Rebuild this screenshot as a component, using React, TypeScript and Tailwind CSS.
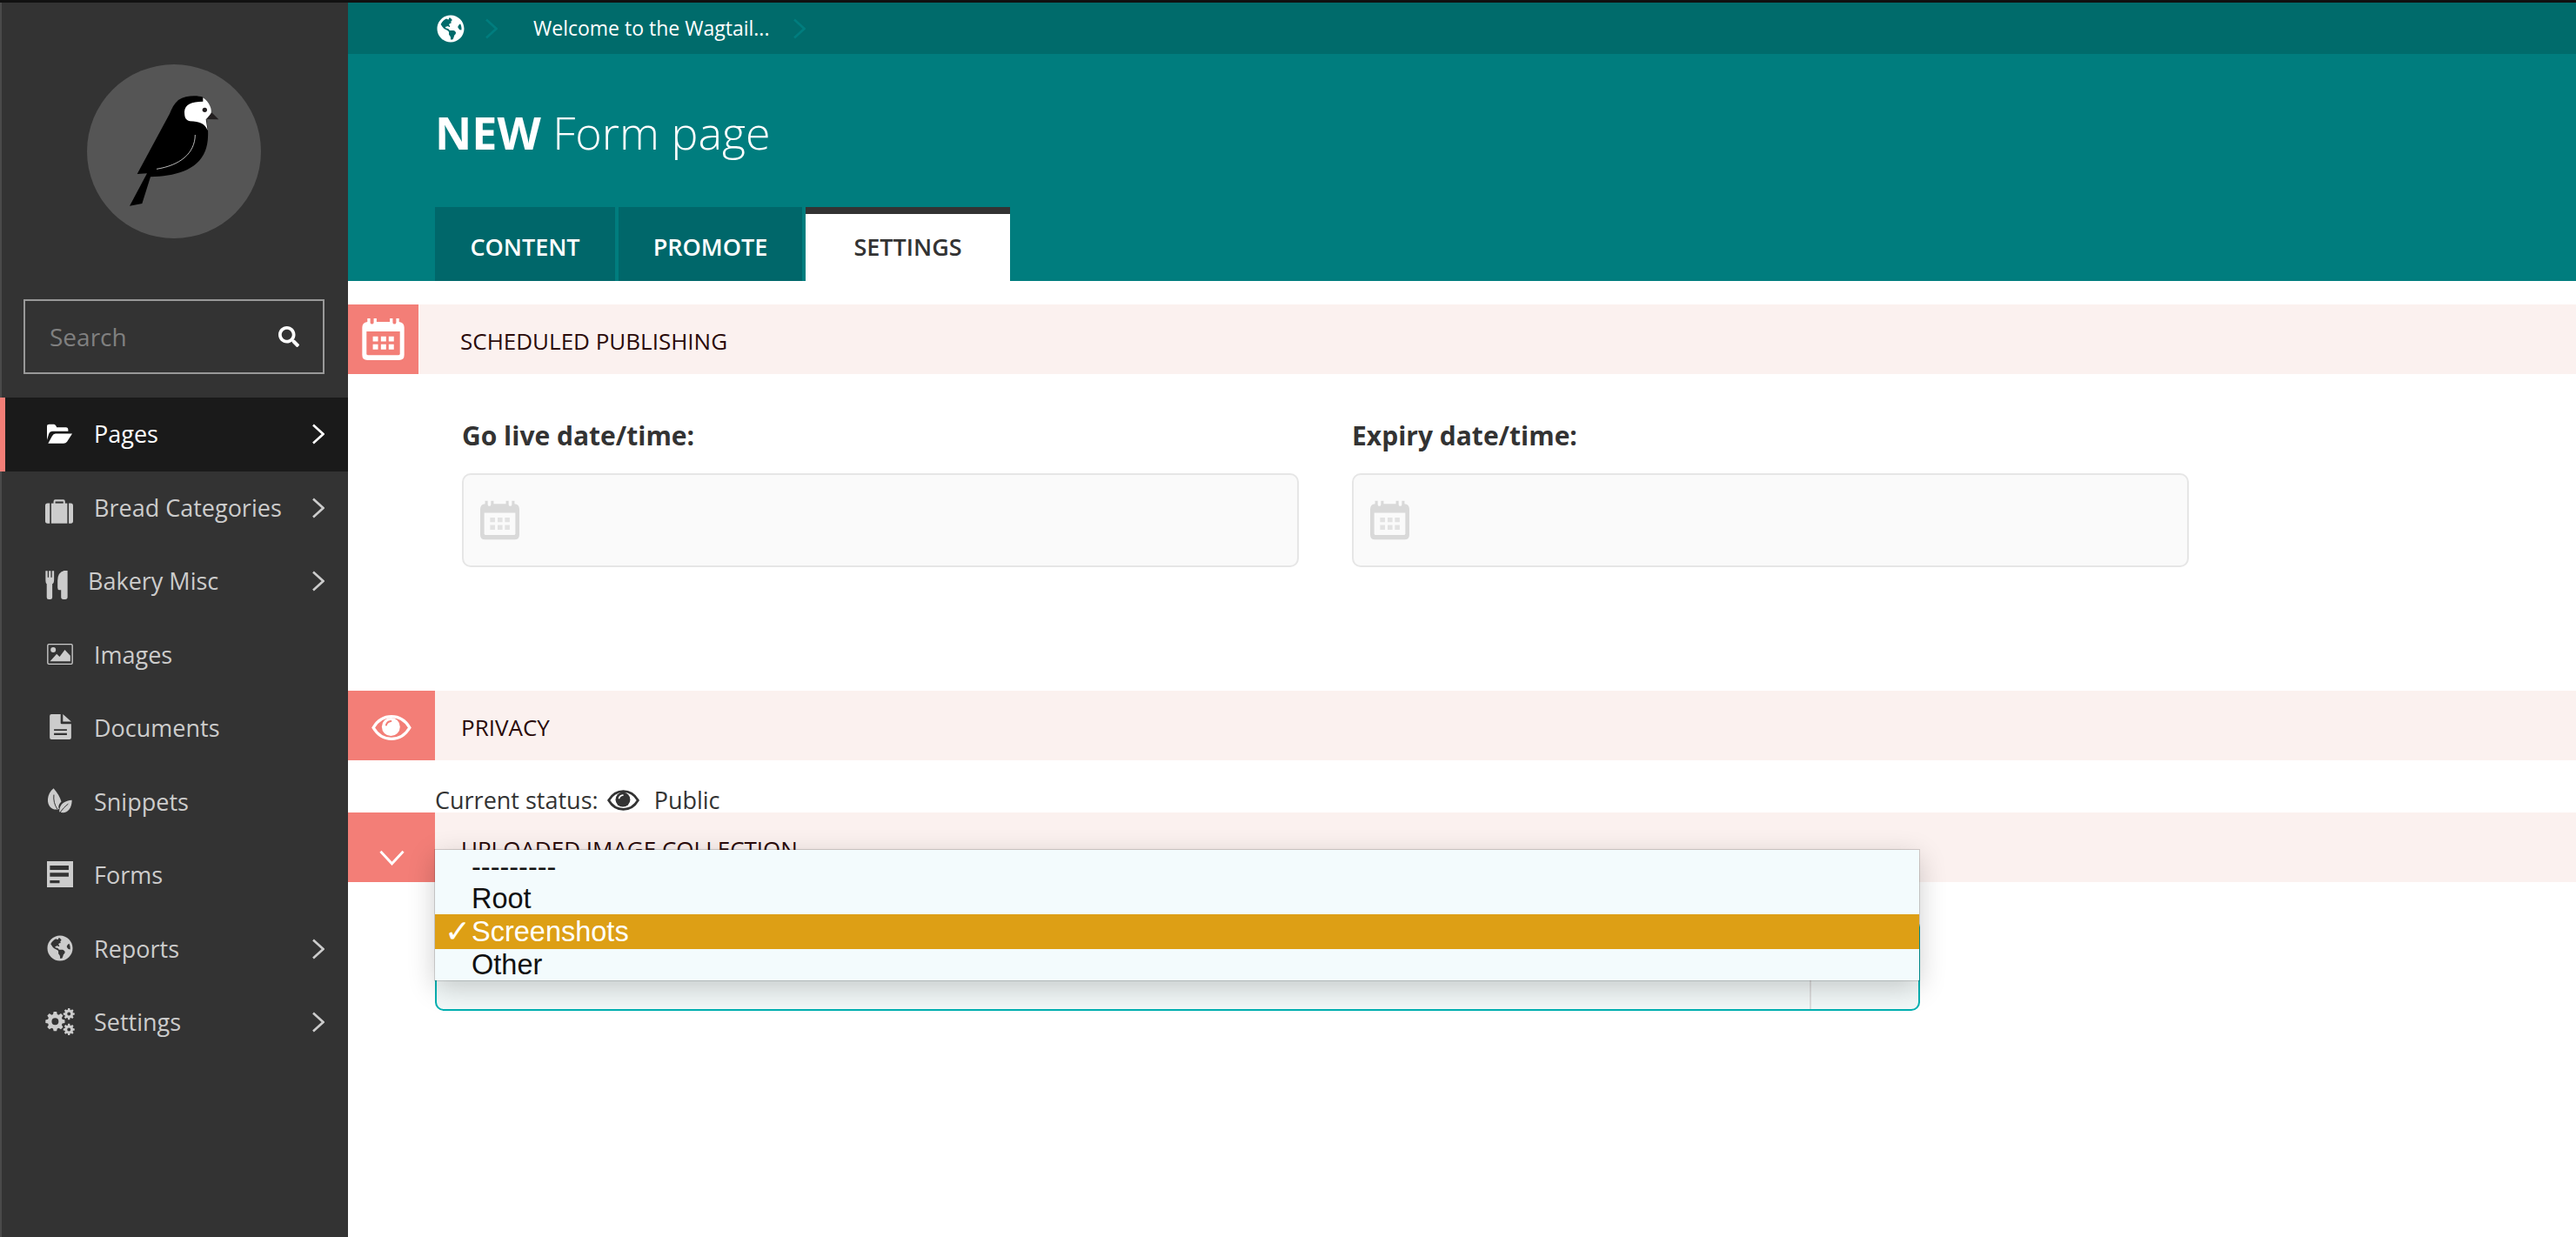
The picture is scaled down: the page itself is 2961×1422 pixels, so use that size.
import { ReactNode } from 'react';
import { FaGlobeAmericas, FaSearch } from 'react-icons/fa';

const Chevron = ({ className }: { className?: string }) => (
  <svg viewBox="0 0 14 24" className={className} fill="none" stroke="currentColor" strokeWidth="2.6">
    <path d="M1 1.5 L12.5 12 L1 22.5" />
  </svg>
);

// builds a cog outline with a hole, used by the settings icon
function gear(cx: number, cy: number, outer: number, inner: number, hole: number, teeth: number) {
  const pts: string[] = [];
  const step = (Math.PI * 2) / teeth;
  for (let i = 0; i < teeth; i++) {
    const a = i * step;
    const corners: [number, number][] = [
      [inner, a - step * 0.36],
      [outer, a - step * 0.2],
      [outer, a + step * 0.2],
      [inner, a + step * 0.36],
    ];
    corners.forEach(([r, t]) => pts.push(`${(cx + r * Math.cos(t)).toFixed(1)} ${(cy + r * Math.sin(t)).toFixed(1)}`));
  }
  return `M${pts.join('L')}Z M${cx - hole} ${cy}a${hole} ${hole} 0 1 0 ${hole * 2} 0a${hole} ${hole} 0 1 0 ${-hole * 2} 0Z`;
}

const FolderIcon = () => (
  <svg viewBox="42 50 88 68" className="w-[29px] h-[23px] ml-[2px] mb-[2px]" fill="#fff">
    <path d="M42 106 V58 Q42 51 50 51 H66 Q72 51 76 62 H108 Q116 62 116 72 V76 H62 Q52 76 48 86 Z" />
    <path d="M46 118 L60 92 Q64 84 72 84 H130 L112 112 Q108 118 100 118 Z" />
  </svg>
);

const SuitcaseIcon = () => (
  <svg viewBox="36 312 97 83" className="w-[32px] h-[28px] mt-[8px]" fill="#ccc">
    <path d="M65 326 V318 Q65 312 71 312 H99 Q105 312 105 318 V326 H99 V319 H71 V326 Z" />
    <path d="M57 325 H113 V395 H57 Z" />
    <path d="M52 325 V395 H44 Q36 395 36 387 V333 Q36 325 44 325 Z" />
    <path d="M118 325 V395 H125 Q133 395 133 387 V333 Q133 325 125 325 Z" />
  </svg>
);

const CutleryIcon = () => (
  <svg viewBox="36 556 77 98" className="w-[26px] h-[33px] mt-[8px]" fill="#ccc">
    <path d="M37 557h7v22h4v-22h7v22h4v-22h7v30q0 12 -6 14v46q0 7 -7 7h-5q-7 0 -7 -7v-46q-4 -2 -4 -14z" />
    <path d="M112 556 V646 q0 8 -8 8 h-6 q-8 0 -8 -8 V622 H84 Q78 622 78 614 V590 Q78 562 100 556 Z" />
  </svg>
);

const ImageIcon = () => (
  <svg viewBox="42 57 89 72" className="w-[30px] h-[24px] ml-[2px] mb-[2px]">
    <rect x="44" y="59" width="85" height="68" rx="4" fill="none" stroke="#ccc" strokeWidth="4" />
    <circle cx="63" cy="78" r="9" fill="#ccc" />
    <path fill="#ccc" d="M52 118 L75 92 L85 102 L103 78 L122 98 V118 Z" />
  </svg>
);

const DocumentIcon = () => (
  <svg viewBox="50 300 75 88" className="w-[25px] h-[29px] ml-[5px] mb-[4px]">
    <path fill="#ccc" d="M56 300 H88 V330 Q88 334 92 334 H125 V382 Q125 388 119 388 H56 Q50 388 50 382 V306 Q50 300 56 300 Z" />
    <path fill="#ccc" d="M96 300 L125 326 H96 Z" />
    <path fill="#333" d="M65 352 H110 V358 H65 Z M65 366 H110 V373 H65 Z" />
  </svg>
);

const LeavesIcon = () => (
  <svg viewBox="45 558 85 86" className="w-[28px] h-[29px] ml-[3px] mb-[2px]">
    <path fill="#ccc" d="M65 558 C40 578 38 615 60 628 Q72 634 84 630 C80 620 84 612 92 604 C88 590 78 572 65 558 Z" />
    <path fill="none" stroke="#333" strokeWidth="3" d="M66 580 C64 598 68 616 78 630" />
    <path fill="#ccc" d="M129 599 C106 600 84 612 85 640 C108 650 129 632 129 599 Z" />
    <path fill="none" stroke="#333" strokeWidth="3" d="M116 612 C106 620 96 630 88 642" />
  </svg>
);

const FormsIcon = () => (
  <svg viewBox="42 87 89 89" className="w-[30px] h-[30px] ml-[2px] mb-[2px]">
    <path fill="#ccc" d="M42 87h89v89H42z" />
    <path fill="#333" d="M52 102h64v15H52zM52 126h64v14H52zM52 152h33v10H52z" />
  </svg>
);

const GearsIcon = () => (
  <svg viewBox="36 592 102 94" className="w-[34px] h-[31px] mb-[2px]" fill="#ccc" fillRule="evenodd">
    <path d={gear(70, 638, 34, 26, 12, 8)} />
    <path d={gear(118, 612, 20, 15, 6, 8)} />
    <path d={gear(118, 666, 20, 15, 6, 8)} />
  </svg>
);

const Calendar = ({ bg, fg, cell, className }: { bg: string; fg: string; cell: string; className?: string }) => (
  <svg viewBox="0 0 146 145" className={className}>
    <path fill={bg} d="M18 0 h10 v14 a6 6 0 0 0 12 0 V0 h10 V12 H96 V0 h10 v14 a6 6 0 0 0 12 0 V0 h10 V12 q18 2 18 20 V127 q0 18 -18 18 H18 q-18 0 -18 -18 V32 q0 -18 18 -20 Z" />
    <path fill={fg} d="M15 45 H131 V122 q0 6 -6 6 H21 q-6 0 -6 -6 Z" />
    <path fill={cell} d="M37 63h18v17H37zM65 63h18v17H65zM92 63h18v17H92zM37 90h18v18H37zM65 90h18v18H65zM92 90h18v18H92z" />
  </svg>
);

const Eye = ({ color, cut, className }: { color: string; cut: string; className?: string }) => (
  <svg viewBox="0 0 136 86" className={className}>
    <path fill="none" stroke={color} strokeWidth="10" d="M6 43 C22 16 44 5 68 5 C92 5 114 16 130 43 C114 70 92 81 68 81 C44 81 22 70 6 43 Z" />
    <circle cx="66" cy="40" r="31" fill={color} />
    <path fill="none" stroke={cut} strokeWidth="6" strokeLinecap="round" d="M50 34 C52 26 58 22 66 21" />
  </svg>
);

const Bird = () => (
  <svg viewBox="300 222 600 600" className="w-[200px] h-[200px]">
    <path fill="#000" d="M447 710 L490 702 L519 610 C600 608 680 590 708 520 C720 490 718 450 716 440 L700 335 C680 328 640 328 615 345 C600 358 592 375 585 392 L473 600 L507 598 Z" />
    <path fill="#fff" d="M700 337 C722 352 733 378 727 395 L710 412 L716 450 C705 425 690 420 655 418 C640 415 636 405 636 385 C638 360 660 350 700 350 Z" />
    <path fill="#231f20" d="M712 411 L730 388 L754 412 Z" />
    <circle cx="706" cy="379" r="8" fill="#231f20" />
    <path fill="none" stroke="#ddd" strokeWidth="2.500" d="M673 465 C672 530 620 570 540 583" />
  </svg>
);

const navItems: { label: string; icon: ReactNode; iconWidth: string; arrow?: boolean; active?: boolean }[] = [
  { label: 'Pages', icon: <FolderIcon />, iconWidth: 'w-[56px]', arrow: true, active: true },
  { label: 'Bread Categories', icon: <SuitcaseIcon />, iconWidth: 'w-[56px]', arrow: true },
  { label: 'Bakery Misc', icon: <CutleryIcon />, iconWidth: 'w-[49px]', arrow: true },
  { label: 'Images', icon: <ImageIcon />, iconWidth: 'w-[56px]' },
  { label: 'Documents', icon: <DocumentIcon />, iconWidth: 'w-[56px]' },
  { label: 'Snippets', icon: <LeavesIcon />, iconWidth: 'w-[56px]' },
  { label: 'Forms', icon: <FormsIcon />, iconWidth: 'w-[56px]' },
  { label: 'Reports', icon: <FaGlobeAmericas className="w-[30px] h-[30px] ml-[2px] mb-[2px]" />, iconWidth: 'w-[56px]', arrow: true },
  { label: 'Settings', icon: <GearsIcon />, iconWidth: 'w-[56px]', arrow: true },
];

function SectionHeader({ title, icon, boxWidth, indent }: { title: string; icon: ReactNode; boxWidth: string; indent: string }) {
  return (
    <div className="flex h-[80px] bg-[#fbf1ef]">
      <div className={`${boxWidth} bg-[#f37e77] flex items-center justify-center text-white shrink-0`}>{icon}</div>
      <div className={`${indent} flex-1 flex items-center pt-[5px] text-[26px] text-[#2a0a0a]`}>{title}</div>
    </div>
  );
}

function DateField({ label }: { label: string }) {
  return (
    <div className="w-[962px]">
      <div className="text-[30px] leading-[38px] font-bold text-[#333]">{label}</div>
      <div className="mt-[24px] h-[108px] bg-[#fafafa] border-2 border-[#e6e6e6] rounded-[10px] flex items-center pl-[19px]">
        <Calendar bg="#d9d9d9" fg="#fafafa" cell="#e2e2e2" className="w-[45px] h-[46px]" />
      </div>
    </div>
  );
}

export default function App() {
  return (
    <div className="w-full h-[1422px] flex flex-col font-['Open_Sans',sans-serif] bg-white overflow-hidden">
      <div className="h-[3px] bg-[#111] shrink-0" />
      <div className="flex-1 flex min-h-0">
        {/* Sidebar */}
        <aside className="w-[400px] shrink-0 bg-[#333] border-l-2 border-[#4a4a4a]">
          <div className="flex justify-center pt-[71px] -ml-[2px]">
            <div className="w-[200px] h-[200px] rounded-full bg-[#555]">
              <Bird />
            </div>
          </div>
          <div className="mt-[70px] ml-[25px] mr-[27px] h-[86px] border-2 border-[#999] flex items-center pl-[28px] pr-[27px]">
            <span className="flex-1 text-[28px] text-[#808080]">Search</span>
            <FaSearch className="w-[24px] h-[24px] text-white" />
          </div>
          <nav className="mt-[27px] -ml-[2px]">
            {navItems.map((item) => (
              <div
                key={item.label}
                className={`h-[84.5px] flex items-center pr-[27px] text-[27px] ${
                  item.active ? 'bg-[#1a1a1a] text-white border-l-[6px] border-[#f37e77] pl-[46px]' : 'text-[#ccc] pl-[52px]'
                }`}
              >
                <div className={`${item.iconWidth} shrink-0 flex items-center text-[#ccc]`}>{item.icon}</div>
                <span className="flex-1">{item.label}</span>
                {item.arrow && <Chevron className="w-[14px] h-[24px]" />}
              </div>
            ))}
          </nav>
        </aside>

        {/* Main */}
        <main className="flex-1 min-w-0">
          <div className="h-[59px] bg-[#006b6b] flex items-center pl-[102px] text-white text-[23px]">
            <FaGlobeAmericas className="w-[32px] h-[32px]" />
            <Chevron className="w-[14px] h-[26px] ml-[24px] text-[#007d7e]" />
            <span className="ml-[41px]">Welcome to the Wagtail...</span>
            <Chevron className="w-[14px] h-[26px] ml-[28px] text-[#007d7e]" />
          </div>
          <div className="h-[261px] bg-[#007d7e] pl-[100px] flex flex-col">
            <h1 className="mt-[55px] text-[52px] leading-[70px] text-white font-light">
              <span className="font-bold">NEW</span> Form page
            </h1>
            <div className="mt-auto flex gap-[4px] text-[27px] font-semibold">
              <div className="w-[207px] h-[85px] bg-[#00676a] text-white pt-[8px] flex items-center justify-center">CONTENT</div>
              <div className="w-[211px] h-[85px] bg-[#00676a] text-white pt-[8px] flex items-center justify-center">PROMOTE</div>
              <div className="w-[235px] h-[85px] bg-white text-[#333] border-t-8 border-[#333] flex items-center justify-center">SETTINGS</div>
            </div>
          </div>

          <div className="pt-[27px]">
            <SectionHeader
              title="SCHEDULED PUBLISHING"
              boxWidth="w-[81px]"
              indent="pl-[48px]"
              icon={<Calendar bg="#fff" fg="#f37e77" cell="#fff" className="w-[49px] h-[48px]" />}
            />
            <div className="h-[364px] pt-[52px] pl-[131px] flex gap-[61px]">
              <DateField label="Go live date/time:" />
              <DateField label="Expiry date/time:" />
            </div>

            <SectionHeader
              title="PRIVACY"
              boxWidth="w-[100px]"
              indent="pl-[30px]"
              icon={<Eye color="#fff" cut="#f37e77" className="w-[46px] h-[29px] mt-[5px]" />}
            />
            <div className="h-[60px] pt-[31px] pl-[100px] flex items-center text-[27px] leading-[36px] text-[#333]">
              <span>Current status:</span>
              <Eye color="#333" cut="#fff" className="w-[37px] h-[24px] ml-[10px]" />
              <span className="ml-[17px]">Public</span>
            </div>
            <SectionHeader
              title="UPLOADED IMAGE COLLECTION"
              boxWidth="w-[100px]"
              indent="pl-[30px]"
              icon={
                <svg viewBox="0 0 30 18" className="w-[29px] h-[18px] mt-[24px]" fill="none" stroke="#fff" strokeWidth="3">
                  <path d="M1.500 1.500 L15 16 L28.500 1.500" />
                </svg>
              }
            />
            <div className="relative ml-[100px] mt-[42px] w-[1707px] h-[106px] bg-[#f2f8f8] border-2 border-[#00b0b1] rounded-[10px] flex justify-end">
              <div className="w-[125px] border-l-2 border-[#ddd]" />
              {/* open native select menu */}
              <div className="absolute -left-[2px] bottom-[33px] w-[1706px] h-[150px] overflow-hidden bg-[#f3fbfd] shadow-[0_0_0_1px_rgba(0,0,0,0.15),0_8px_30px_rgba(0,0,0,0.2)] font-['Liberation_Sans',sans-serif] text-[32.5px] leading-[40px] text-[#111]">
                <div className="h-[34px] pl-[42px]">---------</div>
                <div className="h-[40px] pl-[42px] leading-[44px]">Root</div>
                <div className="h-[40px] bg-[#dd9f15] text-white pl-[11px] flex gap-[11px]">
                  <span className="w-[20px] text-[36px]">✓</span>
                  <span>Screenshots</span>
                </div>
                <div className="h-[36px] pl-[42px] leading-[36px]">Other</div>
              </div>
            </div>
          </div>
        </main>
      </div>
    </div>
  );
}
